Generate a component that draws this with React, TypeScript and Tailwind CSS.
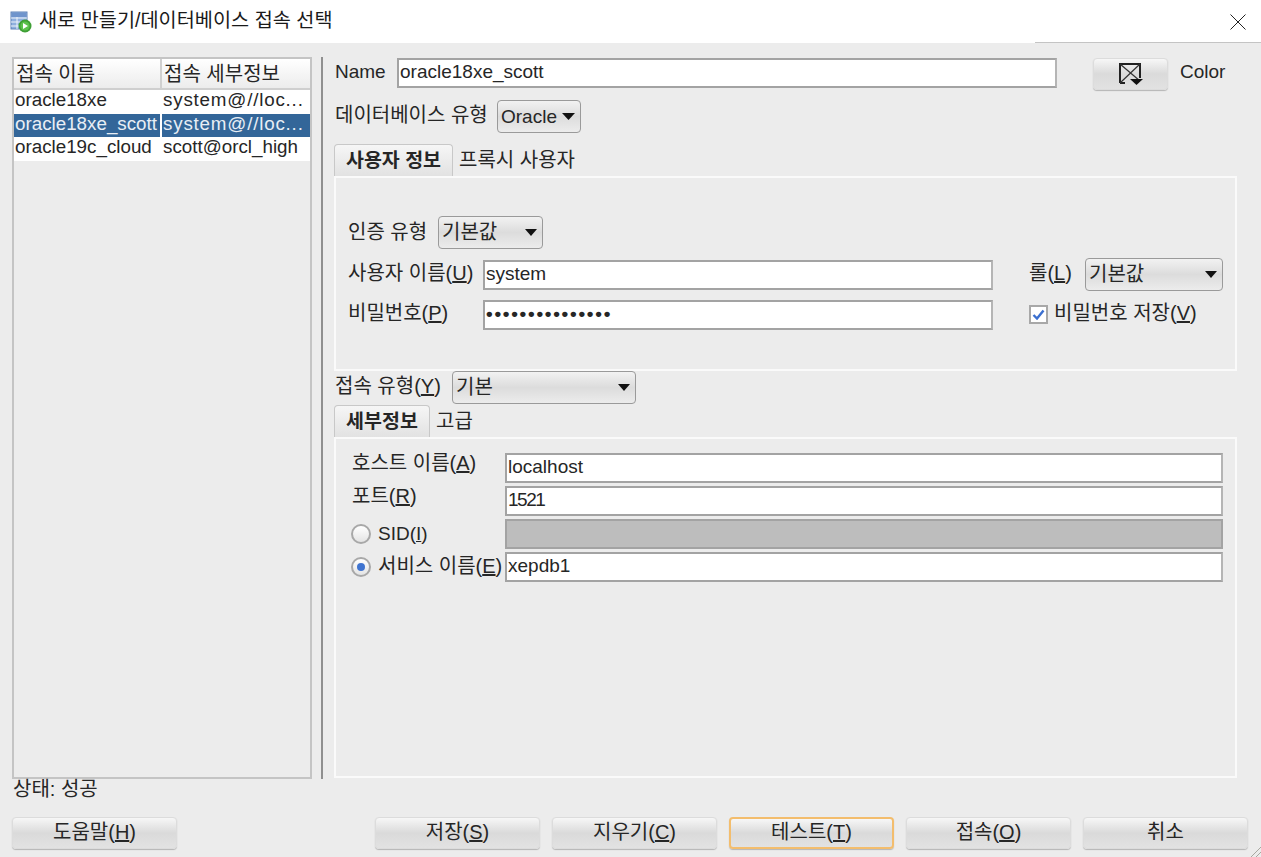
import type { ReactNode } from "react";

const font = "font-['Liberation_Sans','Noto_Sans_CJK_KR',sans-serif]";

const DialogIcon = () => (
  <svg width="22" height="22" viewBox="0 0 22 22" className="shrink-0">
    <rect x="1" y="1" width="16" height="17" fill="#8fb0de" stroke="#5f82b8" />
    <rect x="2" y="2" width="14" height="4" fill="#6f94cc" />
    <path d="M1 7h16M1 11h16M1 15h16M7 6v12" stroke="#eef3fa" strokeWidth="1" />
    <circle cx="15" cy="15" r="6.5" fill="#3f9f35" />
    <circle cx="15" cy="15" r="4.6" fill="#5cc24c" />
    <path d="M13 12l5 3-5 3z" fill="#fff" />
  </svg>
);

const CloseIcon = () => (
  <svg width="16" height="16" viewBox="0 0 16 16" className="block">
    <path d="M0.5 0.5l15 15M15.5 0.5l-15 15" stroke="#222" strokeWidth="1" />
  </svg>
);

const ColorIcon = () => (
  <svg width="26" height="24" viewBox="0 0 26 24" className="block">
    <path d="M2 21V2h20v14M2 21h5" fill="none" stroke="#222" strokeWidth="2" />
    <path d="M2 2l20 17M22 2L2 21" stroke="#333" strokeWidth="1.2" />
    <path d="M12 17h13l-6.5 6z" fill="#111" />
  </svg>
);

const Caret = ({ small }: { small?: boolean }) => (
  <svg width={small ? 12 : 13} height="7" viewBox="0 0 14 8" preserveAspectRatio="none" className="shrink-0">
    <path d="M0 0h14L7 8z" fill="#111" />
  </svg>
);

const Select = ({ value, className, latin }: { value: string; className: string; latin?: boolean }) => (
  <div
    className={`flex h-[33px] items-center justify-between rounded-[4px] border border-[#9a9a9a] bg-linear-to-b from-[#f2f2f2] via-[#dcdcdc] to-[#ececec] pl-[3px] pr-[5px] ${className}`}
  >
    <span className={latin ? "-mt-[1px] text-[19px]" : "-mt-[1px]"}>{value}</span>
    <Caret small={!latin} />
  </div>
);

const Input = ({ value, className }: { value: string; className?: string }) => (
  <div
    className={`flex h-[30px] items-center border-2 border-[#a3a3a3] border-r-[#b5b5b5] bg-white pb-[3px] pl-[1px] text-[19px] ${className ?? ""}`}
  >
    {value}
  </div>
);

const Button = ({ children, className, focused }: { children: ReactNode; className?: string; focused?: boolean }) => (
  <div
    className={`flex h-[32px] w-[165px] items-center justify-center rounded-[4px] bg-linear-to-b from-[#f7f7f7] via-[#dadada] to-[#e2e2e2] pb-[3px] shadow-[0_1px_1px_#b5b5b5] ${
      focused ? "border-2 border-[#f3bd6d]" : "border border-[#dcdcdc]"
    } ${className ?? ""}`}
  >
    {children}
  </div>
);

const Tabs = ({ active, other, width }: { active: string; other: string; width: string }) => (
  <div className="flex h-[32px] items-stretch">
    <div
      className={`flex items-center justify-center rounded-t-[4px] border border-b-0 border-[#c8c8c8] bg-linear-to-b from-[#f6f6f6] to-[#e2e2e2] text-[19.5px] font-bold ${width}`}
    >
      {active}
    </div>
    <div className="flex items-center pl-[6px]">{other}</div>
  </div>
);

const rows = [
  { name: "oracle18xe", detail: "system@//loc...", spaced: true },
  { name: "oracle18xe_scott", detail: "system@//loc...", selected: true, spaced: true },
  { name: "oracle19c_cloud", detail: "scott@orcl_high" },
];

const ConnectionList = () => (
  <div className="h-[722px] w-[300px] border-2 border-[#c4c4c4]">
    <div className="flex h-[31px] border-b-2 border-[#cfcfcf] bg-linear-to-b from-white to-[#ececec]">
      <div className="flex w-[148px] items-center border-r-2 border-[#d0d0d0] pl-[2px]">접속 이름</div>
      <div className="flex flex-1 items-center pl-[2px]">접속 세부정보</div>
    </div>
    {rows.map((row) => (
      <div
        key={row.name}
        className={`flex h-[23.5px] text-[18.8px] ${row.selected ? "bg-[#336699] text-[#e8eef5]" : "bg-white"}`}
      >
        <div className="flex w-[148px] items-center overflow-hidden whitespace-nowrap border-r-2 border-white pb-[2px] pl-[1px]">
          {row.name}
        </div>
        <div
          className={`flex flex-1 items-center overflow-hidden whitespace-nowrap pb-[2px] pl-[1px] ${row.spaced ? "tracking-[0.8px]" : ""}`}
        >
          {row.detail}
        </div>
      </div>
    ))}
  </div>
);

const Radio = ({ checked }: { checked?: boolean }) => (
  <span className="-ml-px mt-[2px] flex h-[20px] w-[20px] shrink-0 items-center justify-center rounded-full border-2 border-[#a8a8a8] bg-linear-to-b from-white to-[#e4e4e4]">
    {checked && <span className="h-[8px] w-[8px] rounded-full bg-[#3f74d0]" />}
  </span>
);

const CheckBox = () => (
  <span className="mt-[2px] flex h-[19px] w-[19px] shrink-0 items-center justify-center border-2 border-[#a8a8a8] bg-white">
    <svg width="13" height="11" viewBox="0 0 13 11">
      <path d="M1.5 6l3.5 3.5L11.5 1.5" fill="none" stroke="#3a6fd0" strokeWidth="2.4" />
    </svg>
  </span>
);

const UserPanel = () => (
  <div className="h-[195px] border-2 border-[#fafafa] px-[12px] pt-[38px]">
    <div className="flex h-[33px] items-center">
      <span className="-mt-[2px] w-[90px]">인증 유형</span>
      <Select value="기본값" className="w-[105px]" />
    </div>
    <div className="mt-[9px] flex h-[33px] items-center">
      <span className="-mt-[3px] w-[135px]">
        사용자 이름(<u>U</u>)
      </span>
      <Input value="system" className="w-[510px]" />
      <span className="-mt-[3px] ml-[36px] w-[56px]">
        롤(<u>L</u>)
      </span>
      <Select value="기본값" className="w-[138px]" />
    </div>
    <div className="mt-[9px] flex h-[30px] items-center">
      <span className="-mt-[5px] w-[135px]">
        비밀번호(<u>P</u>)
      </span>
      <Input value="•••••••••••••••" className="w-[510px] !text-[19px] font-bold tracking-[1.75px]" />
      <span className="-mt-[4px] ml-[36px] flex items-center gap-[6px]">
        <CheckBox />
        <span>
          비밀번호 저장(<u>V</u>)
        </span>
      </span>
    </div>
  </div>
);

const DetailPanel = () => (
  <div className="h-[341px] border-2 border-[#fafafa] pl-[16px] pr-[12px] pt-[14px]">
    <div className="grid grid-cols-[153px_718px] gap-y-[3px]">
      <span>
        호스트 이름(<u>A</u>)
      </span>
      <Input value="localhost" />
      <span>
        포트(<u>R</u>)
      </span>
      <Input value="1521" className="tracking-[-1.5px]" />
      <span className="-mt-[2px] flex items-center gap-[7px]">
        <Radio />
        <span className="text-[19px]">
          SID(<u>I</u>)
        </span>
      </span>
      <div className="h-[30px] border-2 border-[#a3a3a3] bg-[#bdbdbd]" />
      <span className="-mt-[2px] flex items-center gap-[7px] whitespace-nowrap">
        <Radio checked />
        <span>
          서비스 이름(<u>E</u>)
        </span>
      </span>
      <Input value="xepdb1" />
    </div>
  </div>
);

export default function App() {
  return (
    <div className={`${font} relative h-[857px] w-[1261px] overflow-hidden bg-[#ececec] text-[20px] leading-none text-[#262626]`}>
      <div className="flex h-[43px] items-center bg-white pl-[10px] pr-[15px]">
        <DialogIcon />
        <span className="ml-[7px] -mt-[2px] text-[19.7px] text-[#1a1a1a]">새로 만들기/데이터베이스 접속 선택</span>
        <span className="ml-auto">
          <CloseIcon />
        </span>
      </div>
      <div className="ml-[1035px] -mt-px h-px bg-[#c4c4c4]" />

      <div className="flex pl-[12px] pt-[14px]">
        <ConnectionList />
        <div className="ml-[9px] h-[722px] w-[2px] bg-[#8f8f8f]" />
        <div className="ml-[11px] w-[903px]">
          <div className="flex h-[33px] items-start">
            <span className="ml-[1px] mt-[5px] w-[62px] text-[19px]">Name</span>
            <Input value="oracle18xe_scott" className="mt-[1px] w-[660px]" />
            <Button className="ml-[36px] mt-[1px] !w-[75px] !pb-0">
              <ColorIcon />
            </Button>
            <span className="ml-[12px] mt-[5px] text-[19px]">Color</span>
          </div>
          <div className="mt-[10px] flex h-[33px] items-center">
            <span className="-mt-[4px] ml-[1px] w-[162px]">데이터베이스 유형</span>
            <Select value="Oracle" latin className="w-[84px]" />
          </div>
          <div className="mt-[11px]">
            <Tabs active="사용자 정보" other="프록시 사용자" width="w-[119px]" />
          </div>
          <UserPanel />
          <div className="flex h-[33px] items-center">
            <span className="-mt-[3px] ml-[1px] w-[117px]">
              접속 유형(<u>Y</u>)
            </span>
            <Select value="기본" className="w-[184px]" />
          </div>
          <div className="mt-[1px]">
            <Tabs active="세부정보" other="고급" width="w-[96px]" />
          </div>
          <DetailPanel />
        </div>
      </div>

      <div className="ml-[13px] flex h-[20px] items-center">상태: 성공</div>

      <div className="mt-[18px] flex pl-[12px]">
        <Button>
          <span>
            도움말(<u>H</u>)
          </span>
        </Button>
        <div className="ml-[198px] flex gap-[12px]">
          <Button>
            <span>
              저장(<u>S</u>)
            </span>
          </Button>
          <Button>
            <span>
              지우기(<u>C</u>)
            </span>
          </Button>
          <Button focused>
            <span>
              테스트(<u>T</u>)
            </span>
          </Button>
          <Button>
            <span>
              접속(<u>O</u>)
            </span>
          </Button>
          <Button>취소</Button>
        </div>
      </div>

      <svg width="10" height="10" viewBox="0 0 10 10" className="absolute bottom-0 right-0">
        <path d="M0 10L10 0M5 10l5-5" stroke="#a8a8a0" strokeWidth="1" />
      </svg>
    </div>
  );
}
